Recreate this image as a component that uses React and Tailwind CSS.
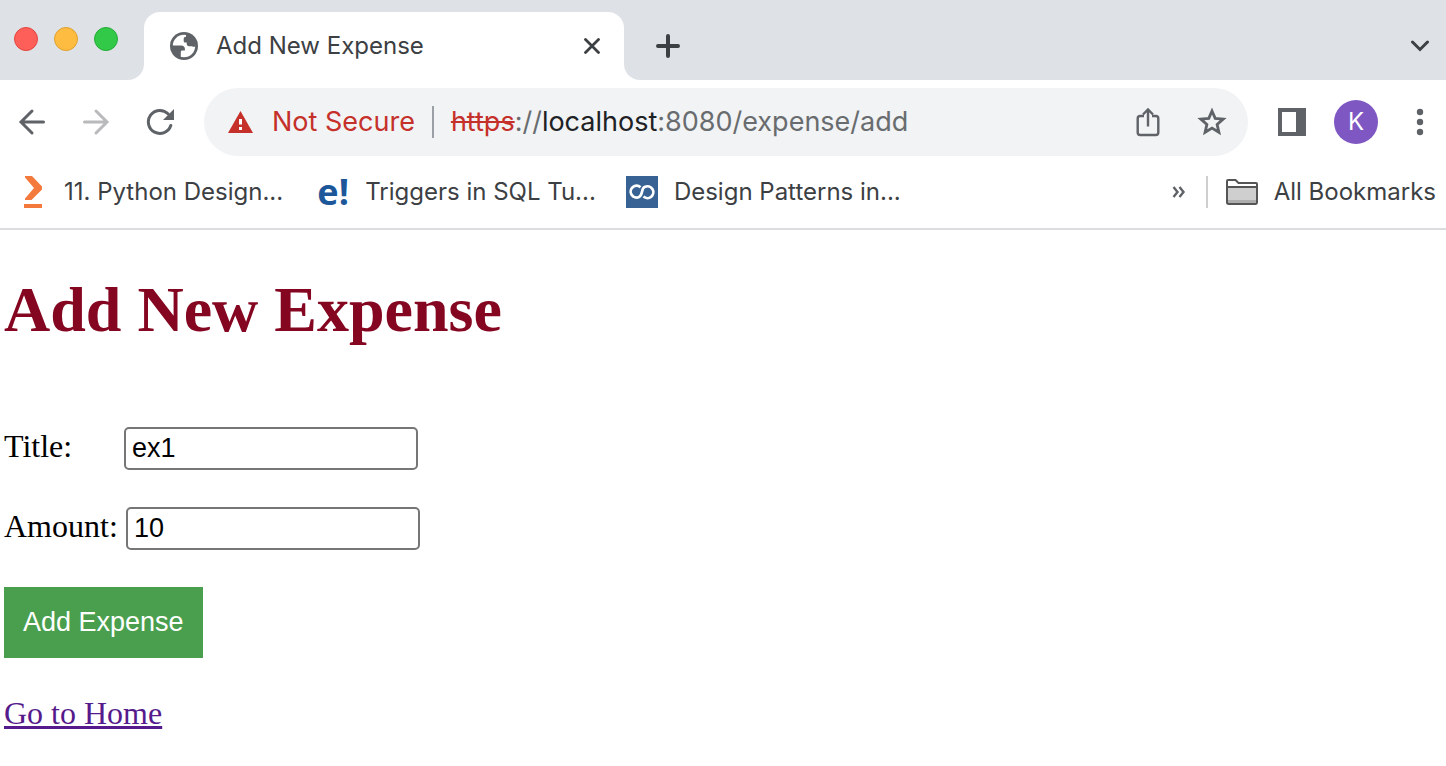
import { useState } from "react";

function GlobeIcon() {
  return (
    <svg className="size-7 shrink-0" viewBox="0 0 28 28" aria-hidden="true">
      <circle cx="14" cy="14" r="14" fill="#5f6368" />
      <circle cx="14" cy="14" r="11.200" fill="#fff" />
      <path
        fill="#5f6368"
        d="M16 1.500v3.200c-1.500 0-2.300.9-2.300 2.300V9c0 1 .6 1.600 1.600 1.600h1.400v1.200c0 1.400.9 2.400 2.300 2.400h2.800c.6 0 1 .3 1.200.6h2.500C26.500 8 22 2 16 1.500z"
      />
      <path
        fill="#5f6368"
        d="M1.500 13.500h9.700c2.300 0 3.700 1.500 3.700 3.300v1.700h-2.500c-1 0-1.600.6-1.600 1.500v4.800l-1.800 1.500C4.500 24 1.500 19 1.500 13.500z"
      />
    </svg>
  );
}

function BackIcon({ className }) {
  return (
    <svg className={className} viewBox="0 0 28 28" fill="none" stroke="currentColor" strokeWidth="3" strokeLinecap="round" aria-hidden="true">
      <path d="M25.500 14H3.500M14 3L3 14l11 11" />
    </svg>
  );
}

function Bookmark({ icon, children, className }) {
  return (
    <a href="#" className={`flex items-center gap-4 whitespace-nowrap ${className ?? ""}`}>
      {icon}
      {children}
    </a>
  );
}

function TabStrip() {
  return (
    <div className="flex h-20 bg-white">
      <div className="flex w-36 shrink-0 gap-4 rounded-br-2xl bg-[#dee1e6] pt-[27px] pl-[14px]">
        <button aria-label="Close window" className="size-6 rounded-full border border-[#e2463f] bg-[#fe5f58]" />
        <button aria-label="Minimize window" className="size-6 rounded-full border border-[#e0a030] bg-[#febc40]" />
        <button aria-label="Zoom window" className="size-6 rounded-full border border-[#24ac38] bg-[#33c948]" />
      </div>
      <div className="w-[480px] shrink-0 bg-[#dee1e6] pt-3">
        <div className="flex h-full items-center rounded-t-2xl bg-white pr-6 pl-[26px]">
          <GlobeIcon />
          <span className="ml-[18px] flex-1 text-2xl text-[#3c4043]">Add New Expense</span>
          <button aria-label="Close tab" className="text-[#3c4043]">
            <svg className="size-4" viewBox="0 0 16 16" fill="none" stroke="currentColor" strokeWidth="2.800" strokeLinecap="round">
              <path d="M1.500 1.500l13 13M14.500 1.500l-13 13" />
            </svg>
          </button>
        </div>
      </div>
      <div className="flex flex-1 items-center justify-between rounded-bl-2xl bg-[#dee1e6] pt-3 pr-4 pl-8 text-[#3c4043]">
        <button aria-label="New tab">
          <svg className="size-6" viewBox="0 0 24 24" fill="none" stroke="currentColor" strokeWidth="4" strokeLinecap="round">
            <path d="M12 2v20M2 12h20" />
          </svg>
        </button>
        <button aria-label="Search tabs">
          <svg className="h-3 w-5" viewBox="0 0 20 12" fill="none" stroke="currentColor" strokeWidth="3" strokeLinecap="round">
            <path d="M2.500 2l7.500 7.500L17.500 2" />
          </svg>
        </button>
      </div>
    </div>
  );
}

function Toolbar() {
  return (
    <div className="flex items-center py-2 pr-[22px] pl-[18px] text-[#5f6368]">
      <button aria-label="Back">
        <BackIcon className="size-7" />
      </button>
      <button aria-label="Forward" className="ml-9 text-[#b9babc]">
        <BackIcon className="size-7 rotate-180" />
      </button>
      <button aria-label="Reload" className="ml-9">
        <svg className="size-7" viewBox="0 0 28 28" fill="none" stroke="currentColor" strokeWidth="3" strokeLinecap="round">
          <path d="M24.800 17.500A11.500 11.500 0 1 1 22 5.800" />
          <path d="M28 1v11H17z" fill="currentColor" stroke="none" />
        </svg>
      </button>
      <div className="ml-[30px] flex h-[68px] flex-1 items-center rounded-full bg-[#f1f3f4] pr-[21px] pl-6">
        <svg className="h-[22px] w-[25px] shrink-0" viewBox="0 0 25 22" aria-hidden="true">
          <path d="M12.500 0L25 22H0z" fill="#c5302a" />
          <path d="M11 8h3v5.500h-3zM11 16h3v3h-3z" fill="#fff" />
        </svg>
        <span className="ml-[19px] text-[27px] text-[#c5302a]">Not Secure</span>
        <span className="mx-[17px] h-8 w-0.5 bg-[#9aa0a6]" />
        <div className="flex-1 text-[27px] whitespace-nowrap text-[#696c6f]">
          <span className="text-[#c5302a] line-through">https</span>://<span className="text-[#202124]">localhost</span>:8080/expense/add
        </div>
        <button aria-label="Share">
          <svg className="h-[30px] w-6" viewBox="0 0 24 30" fill="none" stroke="currentColor" strokeWidth="2.400">
            <path d="M8 9H4.200a2.500 2.500 0 0 0-2.500 2.500v14a2.500 2.500 0 0 0 2.500 2.500h15.600a2.500 2.500 0 0 0 2.500-2.500v-14A2.500 2.500 0 0 0 19.800 9H16M12 19.500V3M7 7.500l5-5 5 5" />
          </svg>
        </button>
        <button aria-label="Bookmark this page" className="ml-[37px]">
          <svg className="size-[30px]" viewBox="0 0 30 30" fill="none" stroke="currentColor" strokeWidth="2.800">
            <path d="M15 4l3.200 7.400 8 .7-6.100 5.300 1.800 7.900L15 21.100l-6.900 4.200 1.800-7.900-6.100-5.300 8-.7z" />
          </svg>
        </button>
      </div>
      <button aria-label="Side panel" className="ml-[30px]">
        <svg className="size-7" viewBox="0 0 28 28">
          <path d="M0 0h28v28H0zM4 4v20h14V4z" fill="currentColor" fillRule="evenodd" />
        </svg>
      </button>
      <button aria-label="Profile" className="ml-7 size-11 rounded-full bg-[#7e57c2] text-2xl text-white">K</button>
      <button aria-label="Menu" className="ml-[38px]">
        <svg className="h-7 w-2" viewBox="0 0 8 28" fill="currentColor">
          <circle cx="4" cy="4" r="3.200" />
          <circle cx="4" cy="14" r="3.200" />
          <circle cx="4" cy="24" r="3.200" />
        </svg>
      </button>
    </div>
  );
}

function BookmarksBar() {
  return (
    <nav className="flex h-[74px] items-center border-b-2 border-[#dadcdd] pr-2.5 pl-4 text-2xl text-[#3c4043]">
      <Bookmark
        icon={
          <svg className="size-8" viewBox="0 0 32 32" aria-hidden="true">
            <path d="M9 0h7l10 10.500v3L15.500 24H9v-1.500l9-10.500L9 1.500z" fill="#f37a3c" />
            <path d="M8 28h18v4H8z" fill="#f37a3c" />
          </svg>
        }
      >
        11. Python Design...
      </Bookmark>
      <Bookmark
        className="ml-[34px]"
        icon={<span className="w-8 text-center font-['Open_Sans',sans-serif] text-[36px] leading-8 font-bold text-[#1b5799]">e!</span>}
      >
        Triggers in SQL Tu...
      </Bookmark>
      <Bookmark
        className="ml-[30px]"
        icon={
          <svg className="size-8" viewBox="0 0 32 32" aria-hidden="true">
            <path d="M0 0h32v32H0z" fill="#386294" />
            <path
              d="M14.500 11.200A5.900 5.900 0 1 0 13 21C17.500 19 14.500 12.500 19 10.800A5.900 5.900 0 1 1 17.500 20.600"
              fill="none"
              stroke="#fff"
              strokeWidth="2.700"
            />
          </svg>
        }
      >
        Design Patterns in...
      </Bookmark>
      <button aria-label="More bookmarks" className="ml-auto">
        <svg className="h-3 w-[14px]" viewBox="0 0 14 12" fill="none" stroke="#5f6368" strokeWidth="2.400">
          <path d="M1.500 1l4 5-4 5M7.500 1l4 5-4 5" />
        </svg>
      </button>
      <span className="ml-5 h-8 w-0.5 bg-[#cfcfcf]" />
      <Bookmark
        className="ml-[18px]"
        icon={
          <svg className="h-[26px] w-8" viewBox="0 0 32 26" aria-hidden="true">
            <path d="M1 23.500V2a1 1 0 0 1 1-1h7.500l3 3H30a1 1 0 0 1 1 1v18.500A1.500 1.500 0 0 1 29.500 25h-27A1.500 1.500 0 0 1 1 23.500z" fill="#fff" />
            <path d="M1 8h30v17H1z" fill="#cfcfcf" />
            <path d="M2 21h28v3H2z" fill="#adadad" />
            <path d="M1 23.500V2a1 1 0 0 1 1-1h7.500l3 3H30a1 1 0 0 1 1 1v18.500A1.500 1.500 0 0 1 29.500 25h-27A1.500 1.500 0 0 1 1 23.500zM1 8h30" fill="none" stroke="#555" strokeWidth="2" />
          </svg>
        }
      >
        All Bookmarks
      </Bookmark>
    </nav>
  );
}

function Field({ id, label, value, onChange, className }) {
  return (
    <div className="flex items-baseline">
      <label htmlFor={id} className={className}>
        {label}
      </label>
      <input
        id={id}
        value={value}
        onChange={(event) => onChange(event.target.value)}
        className="h-[43px] w-[294px] rounded-[5px] border-2 border-[#767676] bg-white px-1.5 font-['Liberation_Sans',sans-serif] text-[27px] text-black outline-none"
      />
    </div>
  );
}

export default function App() {
  const [title, setTitle] = useState("ex1");
  const [amount, setAmount] = useState("10");

  return (
    <div className="min-h-screen bg-white font-['Inter',sans-serif]">
      <header className="flex flex-col">
        <TabStrip />
        <div className="-mb-2">
          <Toolbar />
        </div>
        <BookmarksBar />
      </header>
      <main className="px-1 pt-[43px] font-['Liberation_Serif',serif] text-[32px] leading-9 text-black">
        <h1 className="text-[64px] leading-[74px] font-bold text-[#840620]">Add New Expense</h1>
        <form className="mt-20 flex flex-col items-start gap-[37px]" onSubmit={(event) => event.preventDefault()}>
          <Field id="title" label="Title:" value={title} onChange={setTitle} className="w-[120px]" />
          <Field id="amount" label="Amount:" value={amount} onChange={setAmount} className="w-[122px]" />
          <button type="submit" className="h-[71px] bg-[#4a9f4e] px-[19px] pb-0.5 font-['Liberation_Sans',sans-serif] text-[27px] text-white">
            Add Expense
          </button>
          <a href="#" className="text-[#551a8b] underline decoration-[3px]">
            Go to Home
          </a>
        </form>
      </main>
    </div>
  );
}
